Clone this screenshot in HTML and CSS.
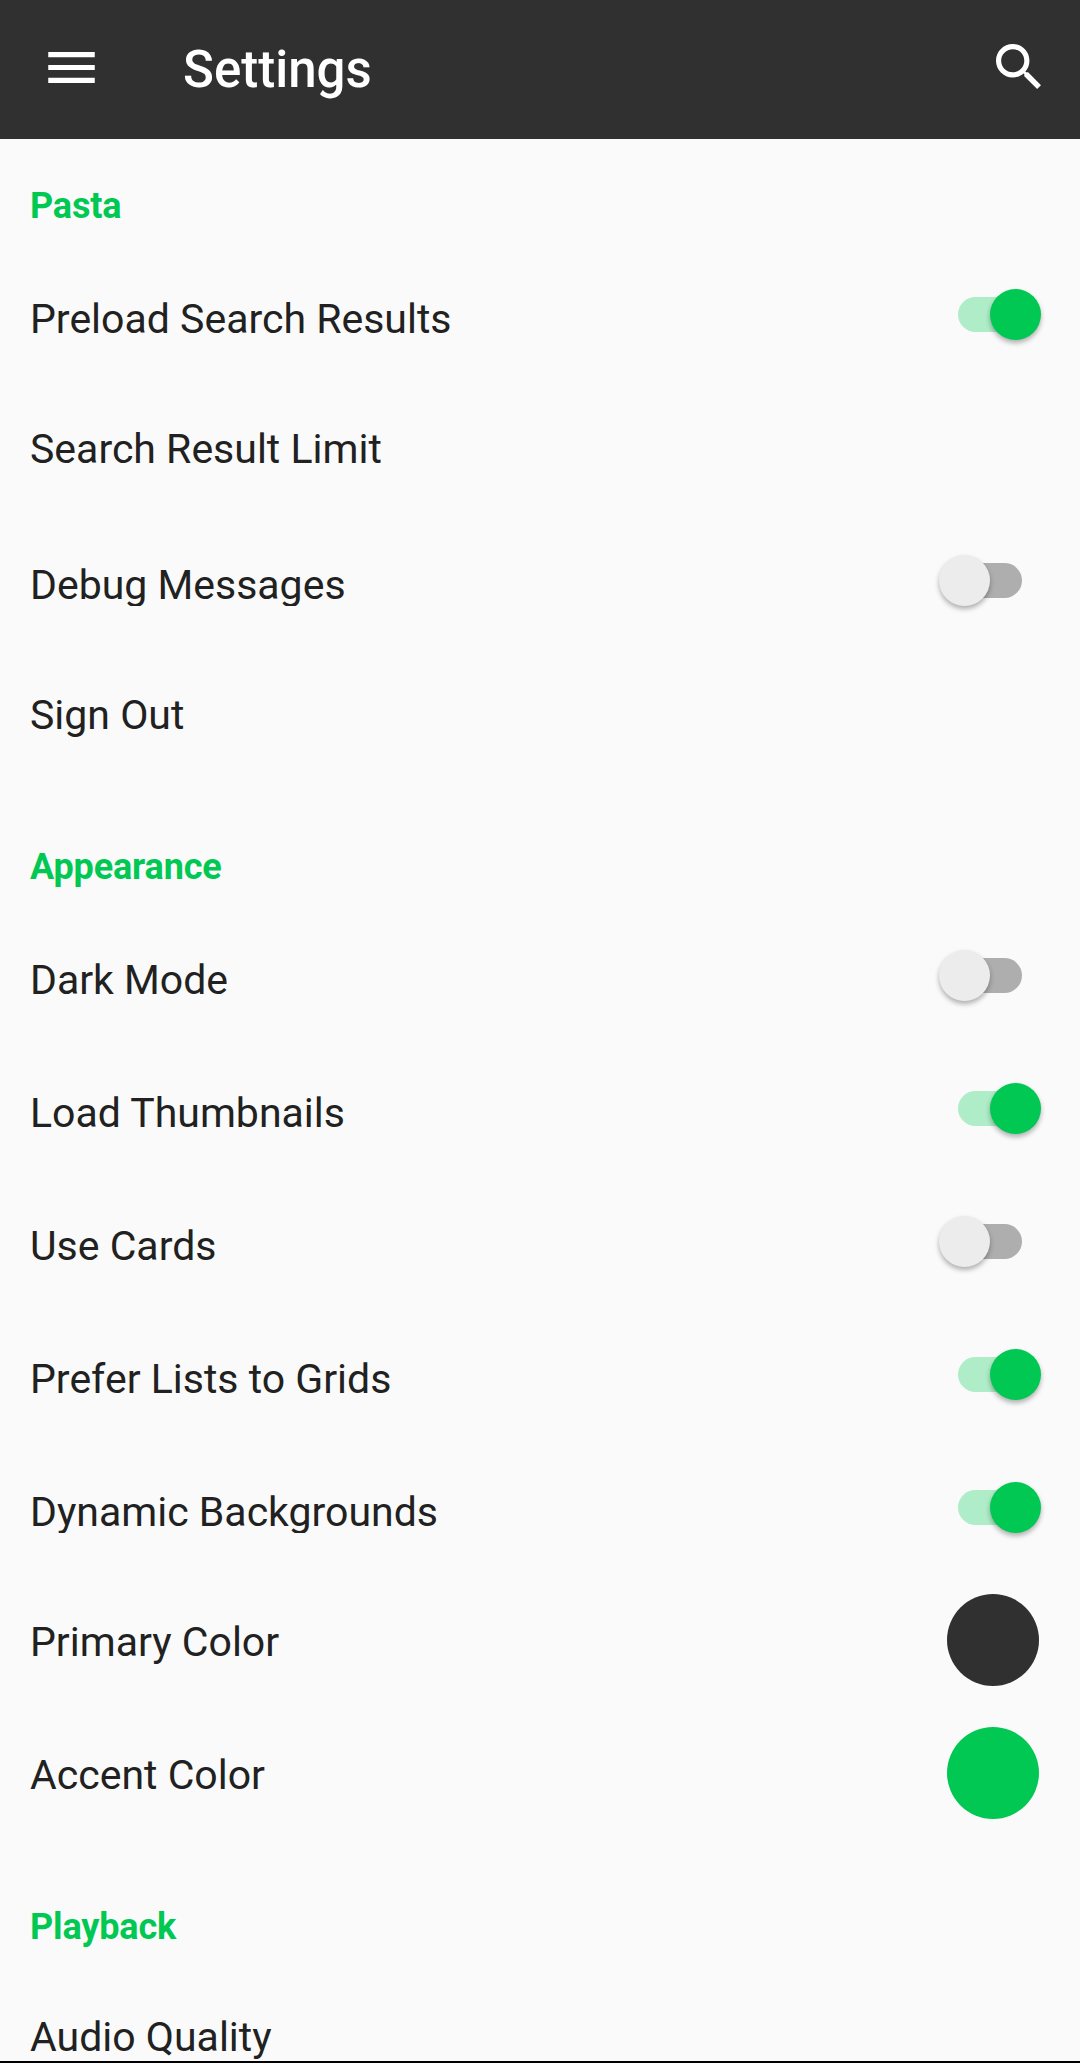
FILE: index.html
```html
<!DOCTYPE html>
<html lang="en">
<head>
    <meta charset="UTF-8">
    <meta name="viewport" content="width=device-width, initial-scale=1.0">
    <title>Settings</title>
    <link rel="stylesheet" href="styles.css">
</head>
<body>
    <header class="toolbar">
        <svg class="menu-icon" viewBox="0 0 18 12">
            <path d="M0 12h18v-2H0v2zm0-5h18V5H0v2zm0-7v2h18V0H0z"/>
        </svg>
        <h1>Settings</h1>
        <svg class="search-icon" viewBox="3 3 17.5 17.5">
            <path d="M15.5 14h-.79l-.28-.27C15.41 12.59 16 11.11 16 9.5 16 5.91 13.09 3 9.5 3S3 5.91 3 9.5 5.91 16 9.5 16c1.61 0 3.09-.59 4.23-1.57l.27.28v.79l5 4.99L20.49 19l-4.99-5zm-6 0C7.01 14 5 11.99 5 9.5S7.01 5 9.5 5 14 7.01 14 9.5 11.99 14 9.5 14z"/>
        </svg>
    </header>

    <main class="settings">
        <h2 class="first">Pasta</h2>
        <div class="row toggle"><span class="label">Preload Search Results</span><span class="switch on"></span></div>
        <div class="row"><span class="label">Search Result Limit</span></div>
        <div class="row toggle"><span class="label">Debug Messages</span><span class="switch"></span></div>
        <div class="row"><span class="label">Sign Out</span></div>

        <h2>Appearance</h2>
        <div class="row toggle"><span class="label">Dark Mode</span><span class="switch"></span></div>
        <div class="row toggle"><span class="label">Load Thumbnails</span><span class="switch on"></span></div>
        <div class="row toggle"><span class="label">Use Cards</span><span class="switch"></span></div>
        <div class="row toggle"><span class="label">Prefer Lists to Grids</span><span class="switch on"></span></div>
        <div class="row toggle"><span class="label">Dynamic Backgrounds</span><span class="switch on"></span></div>
        <div class="row"><span class="label">Primary Color</span><span class="color primary"></span></div>
        <div class="row"><span class="label">Accent Color</span><span class="color accent"></span></div>

        <h2>Playback</h2>
        <div class="row"><span class="label">Audio Quality</span></div>
    </main>
</body>
</html>
```
FILE: styles.css
```css
body {
    font-family: Roboto, sans-serif;
    margin: 0;
    height: 2061px;
    overflow: hidden;
    display: flex;
    flex-direction: column;
    background-color: #fafafa;
    border-bottom: 2px solid #000;
}

.toolbar {
    box-sizing: border-box;
    flex: none;
    height: 139px;
    padding: 0 39px 4px 48px;
    display: flex;
    align-items: center;
    background-color: #303030;
    color: #fff;
}

.toolbar svg {
    fill: #fff;
}

.menu-icon {
    width: 47px;
    height: 31px;
}

.toolbar h1 {
    flex: 1;
    margin: 4px 0 0 88px;
    font-size: 51px;
    font-weight: 500;
}

.search-icon {
    width: 45px;
    height: 45px;
    margin-bottom: 2px;
}

.settings {
    flex: 1;
    min-height: 0;
    overflow: hidden;
}

h2 {
    box-sizing: border-box;
    height: 129px;
    margin: 0;
    padding: 66px 30px 0;
    font-size: 36px;
    line-height: 42px;
    font-weight: 700;
    letter-spacing: -0.15px;
    color: #00c853;
}

h2.first {
    height: 109px;
    padding-top: 46px;
}

.row {
    box-sizing: border-box;
    height: 133px;
    padding: 0 40px 0 30px;
    display: flex;
    align-items: center;
    justify-content: space-between;
}

.label {
    padding-top: 4px;
    font-size: 41px;
    line-height: 49px;
    color: #212121;
}

.toggle .label {
    box-sizing: border-box;
    height: 51px;
    padding-top: 9px;
    line-height: 42px;
    overflow: hidden;
}

.switch {
    position: relative;
    box-sizing: border-box;
    width: 64px;
    height: 35px;
    margin-right: 18px;
    border-radius: 18px;
    background-color: #aeaeae;
}

.switch::after {
    content: "";
    position: absolute;
    top: -8px;
    left: -19px;
    width: 51px;
    height: 51px;
    border-radius: 50%;
    background-color: #ececec;
    box-shadow: 0 3px 5px rgba(0, 0, 0, 0.3);
}

.switch.on {
    width: 82px;
    margin-right: 0;
    background-color: #afecc8;
}

.switch.on::after {
    left: 32px;
    background-color: #00c853;
}

.color {
    width: 92px;
    height: 92px;
    margin: 0 1px 1px 0;
    border-radius: 50%;
}

.color.primary {
    background-color: #303030;
}

.color.accent {
    background-color: #00c853;
}
```
